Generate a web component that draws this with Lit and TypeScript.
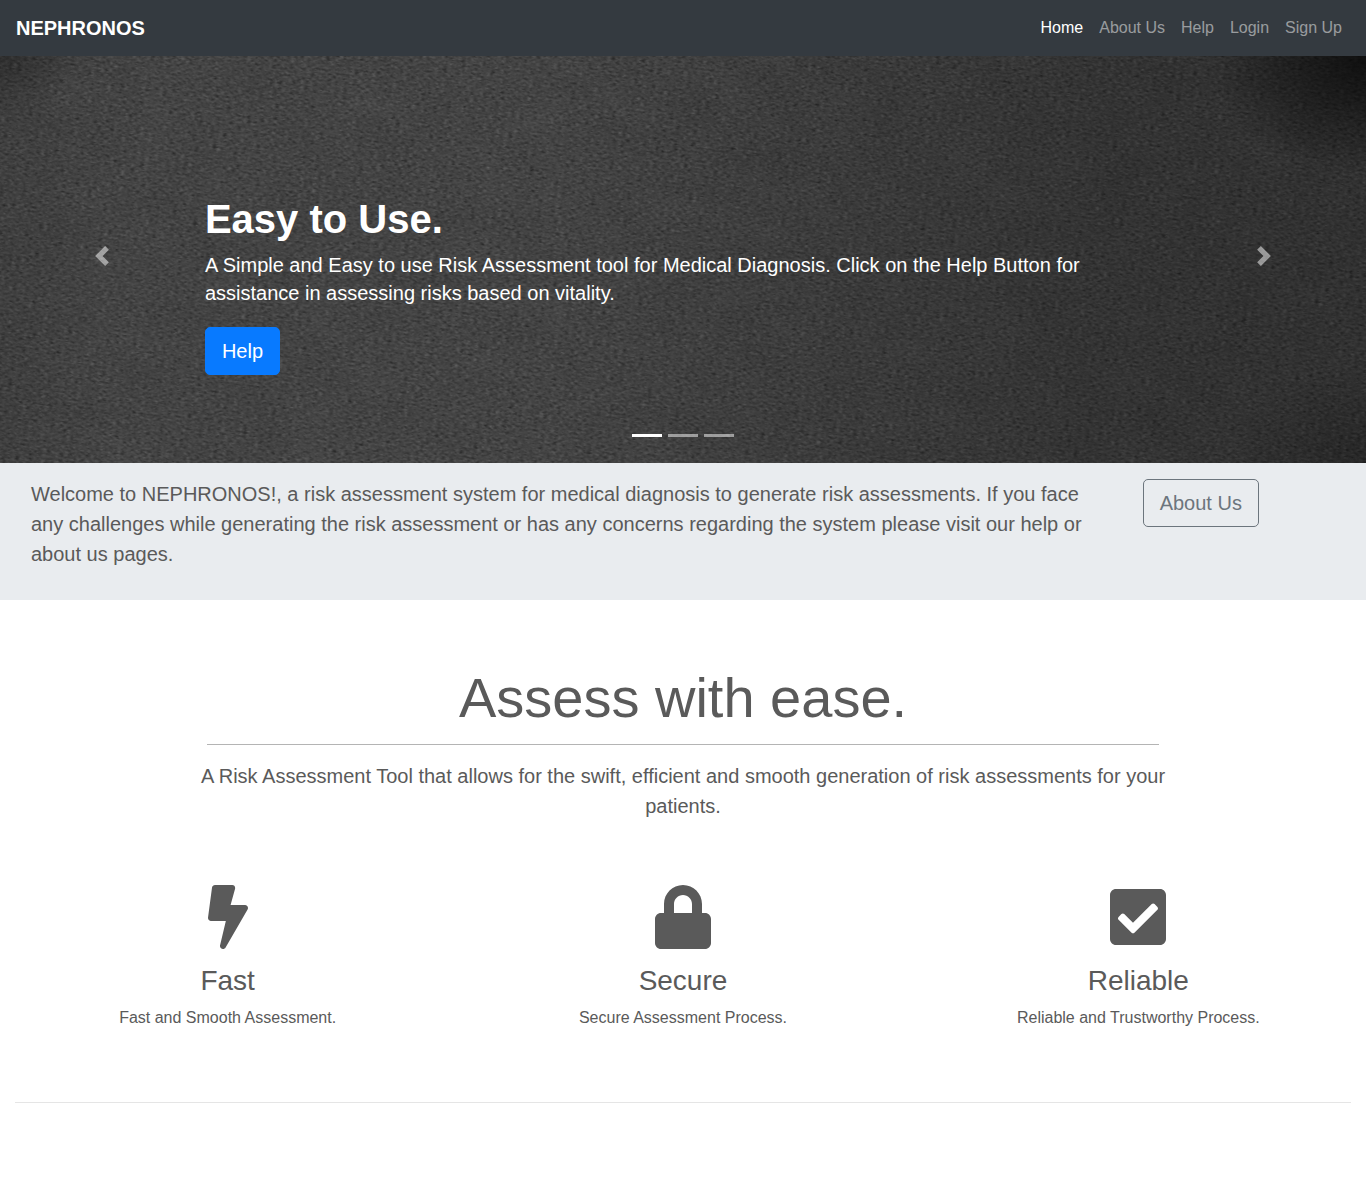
import { LitElement, html, css, svg } from "lit";
import { customElement, state } from "lit/decorators.js";

const NAV_LINKS = ["Home", "About Us", "Help", "Login", "Sign Up"];

const FEATURES = [
  {
    title: "Fast",
    text: "Fast and Smooth Assessment.",
    box: "0 0 320 512",
    icon: svg`<path d="M296 160H180.6l36-131C220 14 210 0 194 0H56C44 0 33.8 8.9 32.2 20.8l-32 240C-1.7 275.2 9.5 288 24 288h118.7L96.6 482.5c-3.6 15.2 8 29.5 23.3 29.5 8.4 0 16.4-4.4 20.8-12l176-304c9.3-15.9-2.2-36-20.7-36z"></path>`,
  },
  {
    title: "Secure",
    text: "Secure Assessment Process.",
    box: "0 0 448 512",
    icon: svg`<path d="M400 224h-24v-72C376 68.2 307.8 0 224 0S72 68.2 72 152v72H48c-26.5 0-48 21.5-48 48v192c0 26.5 21.5 48 48 48h352c26.5 0 48-21.5 48-48V272c0-26.5-21.5-48-48-48zm-104 0H152v-72c0-39.7 32.3-72 72-72s72 32.3 72 72v72z"></path>`,
  },
  {
    title: "Reliable",
    text: "Reliable and Trustworthy Process.",
    box: "0 0 448 512",
    icon: svg`<path d="M400 480H48c-26.51 0-48-21.49-48-48V80c0-26.51 21.49-48 48-48h352c26.51 0 48 21.49 48 48v352c0 26.51-21.49 48-48 48zm-204.686-98.059l184-184c6.248-6.248 6.248-16.379 0-22.627l-22.627-22.627c-6.248-6.248-16.379-6.249-22.628 0L184 302.745l-70.059-70.059c-6.248-6.248-16.379-6.248-22.628 0l-22.627 22.627c-6.248 6.248-6.248 16.379 0 22.627l104 104c6.249 6.25 16.379 6.25 22.628.001z"></path>`,
  },
];

@customElement("app-root")
export class AppRoot extends LitElement {
  @state() private slide = 0;

  static styles = css`
    :host {
      display: block;
      font-family: "Liberation Sans", Arial, sans-serif;
      font-size: 16px;
      line-height: 24px;
      color: #5a5a5a;
      background: #fff;
    }
    * {
      box-sizing: border-box;
    }
    h1,
    h2,
    h3,
    p {
      margin: 0;
    }
    a {
      text-decoration: none;
    }
    .navbar {
      display: flex;
      align-items: center;
      justify-content: space-between;
      min-height: 56px;
      padding: 8px 16px;
      background: #343a40;
    }
    .brand {
      font-size: 20px;
      line-height: 30px;
      font-weight: 700;
      color: #fff;
    }
    .links {
      display: flex;
    }
    .link {
      padding: 8px;
      color: rgba(255, 255, 255, 0.5);
    }
    .link.active {
      color: #fff;
    }
    .hero {
      position: relative;
      display: grid;
      grid-template-columns: 15% 1fr 15%;
      background: #3a3a3a;
      color: #fff;
      overflow: hidden;
    }
    .texture {
      position: absolute;
      top: -50%;
      left: -5%;
      width: 110%;
      height: 200%;
      transform: rotate(8deg);
    }
    .shade {
      position: absolute;
      inset: 0;
      background:
        radial-gradient(ellipse 160px 120px at 100% 0, rgba(0, 0, 0, 0.7), transparent),
        radial-gradient(ellipse 80px 60px at 0 0, rgba(0, 0, 0, 0.25), transparent),
        radial-gradient(ellipse 140px 100px at 100% 100%, rgba(0, 0, 0, 0.2), transparent),
        linear-gradient(90deg, rgba(0, 0, 0, 0.08), transparent 8%, transparent 40%, rgba(0, 0, 0, 0.24) 80%, rgba(0, 0, 0, 0.28));
    }
    .arrow {
      position: relative;
      grid-row: 1 / 3;
      display: flex;
      align-items: center;
      justify-content: center;
      padding: 0 0 7px;
      border: 0;
      background: none;
      color: #fff;
      opacity: 0.5;
      cursor: pointer;
    }
    .arrow.prev {
      grid-column: 1;
    }
    .arrow.next {
      grid-column: 3;
    }
    .arrow svg {
      width: 20px;
      height: 20px;
      fill: currentColor;
    }
    .slide {
      position: relative;
      grid-column: 2;
      grid-row: 1;
      display: flex;
      flex-direction: column;
      align-items: flex-start;
      padding: 139px 0 49px;
    }
    .slide-title {
      font-size: 40px;
      line-height: 48px;
      font-weight: 700;
      margin-bottom: 8px;
    }
    .slide-text {
      font-size: 20px;
      line-height: 28px;
      margin-bottom: 20px;
    }
    .btn {
      padding: 8px 16px;
      border: 1px solid;
      border-radius: 5px;
      font-size: 20px;
      line-height: 30px;
    }
    .btn.primary {
      background: #087aff;
      border-color: #087aff;
      color: #fff;
    }
    .btn.outline {
      color: #6c757d;
      border-color: #6c757d;
    }
    .dots {
      position: relative;
      grid-column: 2;
      grid-row: 2;
      display: flex;
      justify-content: center;
      gap: 6px;
      padding-bottom: 16px;
    }
    .dot {
      width: 30px;
      padding: 10px 0;
      border: 0;
      background: none;
      opacity: 0.5;
      cursor: pointer;
    }
    .dot::before {
      content: "";
      display: block;
      height: 3px;
      background: #fff;
    }
    .dot.active {
      opacity: 1;
    }
    .welcome {
      display: grid;
      grid-template-columns: 10fr 2fr;
      align-items: start;
      padding: 16px 16px 31px;
      background: #e9ecef;
    }
    .cell {
      display: flex;
      padding: 0 15px;
    }
    .lead {
      font-size: 20px;
      line-height: 30px;
    }
    .intro {
      display: flex;
      flex-direction: column;
      align-items: center;
      padding: 64px 16px 16px;
      text-align: center;
    }
    .headline {
      font-size: 56px;
      line-height: 68px;
      font-weight: 400;
      margin-bottom: 12px;
    }
    .rule {
      width: 100%;
      margin: 0;
      border: 0;
      border-top: 1px solid rgba(0, 0, 0, 0.1);
    }
    .rule.dark {
      max-width: 952px;
      border-color: #b4b4b4;
      margin-bottom: 16px;
    }
    .intro .lead {
      max-width: 1000px;
    }
    .features {
      display: grid;
      grid-template-columns: repeat(3, 1fr);
      padding: 48px 0 72px;
    }
    .feature {
      display: flex;
      flex-direction: column;
      align-items: center;
      text-align: center;
      padding: 0 15px;
    }
    .feature svg {
      height: 64px;
      fill: currentColor;
      margin-bottom: 15px;
    }
    .feature-title {
      font-size: 28px;
      line-height: 34px;
      font-weight: 400;
      margin-bottom: 8px;
    }
    .footer {
      padding: 0 15px 74px;
    }
  `;

  private move(step: number) {
    this.slide = (this.slide + step + 3) % 3;
  }

  render() {
    return html`
      <nav class="navbar">
        <a class="brand" href="#">NEPHRONOS</a>
        <div class="links">
          ${NAV_LINKS.map(
            (name, i) => html`<a class="link ${i === 0 ? "active" : ""}" href="#">${name}</a>`,
          )}
        </div>
      </nav>

      <section class="hero">
        <svg class="texture" aria-hidden="true">
          <filter id="grain" x="0" y="0" width="100%" height="100%" color-interpolation-filters="sRGB">
            <feTurbulence type="fractalNoise" baseFrequency="0.23 0.47" numOctaves="2" seed="7" result="fine"></feTurbulence>
            <feTurbulence type="fractalNoise" baseFrequency="0.021 0.029" numOctaves="4" seed="3" result="broad"></feTurbulence>
            <feComposite in="fine" in2="broad" operator="arithmetic" k1="0" k2="0.9" k3="0.1" k4="0"></feComposite>
            <feColorMatrix
              values="0.18 0.15 0.13 0 0.034
                      0.18 0.15 0.13 0 0.034
                      0.18 0.15 0.13 0 0.034
                      0 0 0 0 1"
            ></feColorMatrix>
          </filter>
          <rect width="100%" height="100%" filter="url(#grain)"></rect>
        </svg>
        <div class="shade"></div>
        <button class="arrow prev" aria-label="Previous" @click=${() => this.move(-1)}>
          <svg viewBox="0 0 8 8"><path d="M5.25 0l-4 4 4 4 1.5-1.5L4.25 4l2.5-2.5L5.25 0z"></path></svg>
        </button>
        <div class="slide">
          <h1 class="slide-title">Easy to Use.</h1>
          <p class="slide-text">
            A Simple and Easy to use Risk Assessment tool for Medical Diagnosis. Click on the Help
            Button for assistance in assessing risks based on vitality.
          </p>
          <a class="btn primary" href="#">Help</a>
        </div>
        <button class="arrow next" aria-label="Next" @click=${() => this.move(1)}>
          <svg viewBox="0 0 8 8"><path d="M2.75 0l-1.5 1.5L3.75 4l-2.5 2.5L2.75 8l4-4-4-4z"></path></svg>
        </button>
        <div class="dots">
          ${[0, 1, 2].map(
            (i) => html`<button
              class="dot ${i === this.slide ? "active" : ""}"
              aria-label="Slide ${i + 1}"
              @click=${() => (this.slide = i)}
            ></button>`,
          )}
        </div>
      </section>

      <section class="welcome">
        <div class="cell">
          <p class="lead">
            Welcome to NEPHRONOS!, a risk assessment system for medical diagnosis to generate risk
            assessments. If you face any challenges while generating the risk assessment or has any
            concerns regarding the system please visit our help or about us pages.
          </p>
        </div>
        <div class="cell"><a class="btn outline" href="#">About Us</a></div>
      </section>

      <section class="intro">
        <h2 class="headline">Assess with ease.</h2>
        <hr class="rule dark" />
        <p class="lead">
          A Risk Assessment Tool that allows for the swift, efficient and smooth generation of risk
          assessments for your patients.
        </p>
      </section>

      <section class="features">
        ${FEATURES.map(
          (f) => html`<div class="feature">
            <svg viewBox=${f.box} aria-hidden="true">${f.icon}</svg>
            <h3 class="feature-title">${f.title}</h3>
            <p>${f.text}</p>
          </div>`,
        )}
      </section>

      <footer class="footer"><hr class="rule" /></footer>
    `;
  }
}
